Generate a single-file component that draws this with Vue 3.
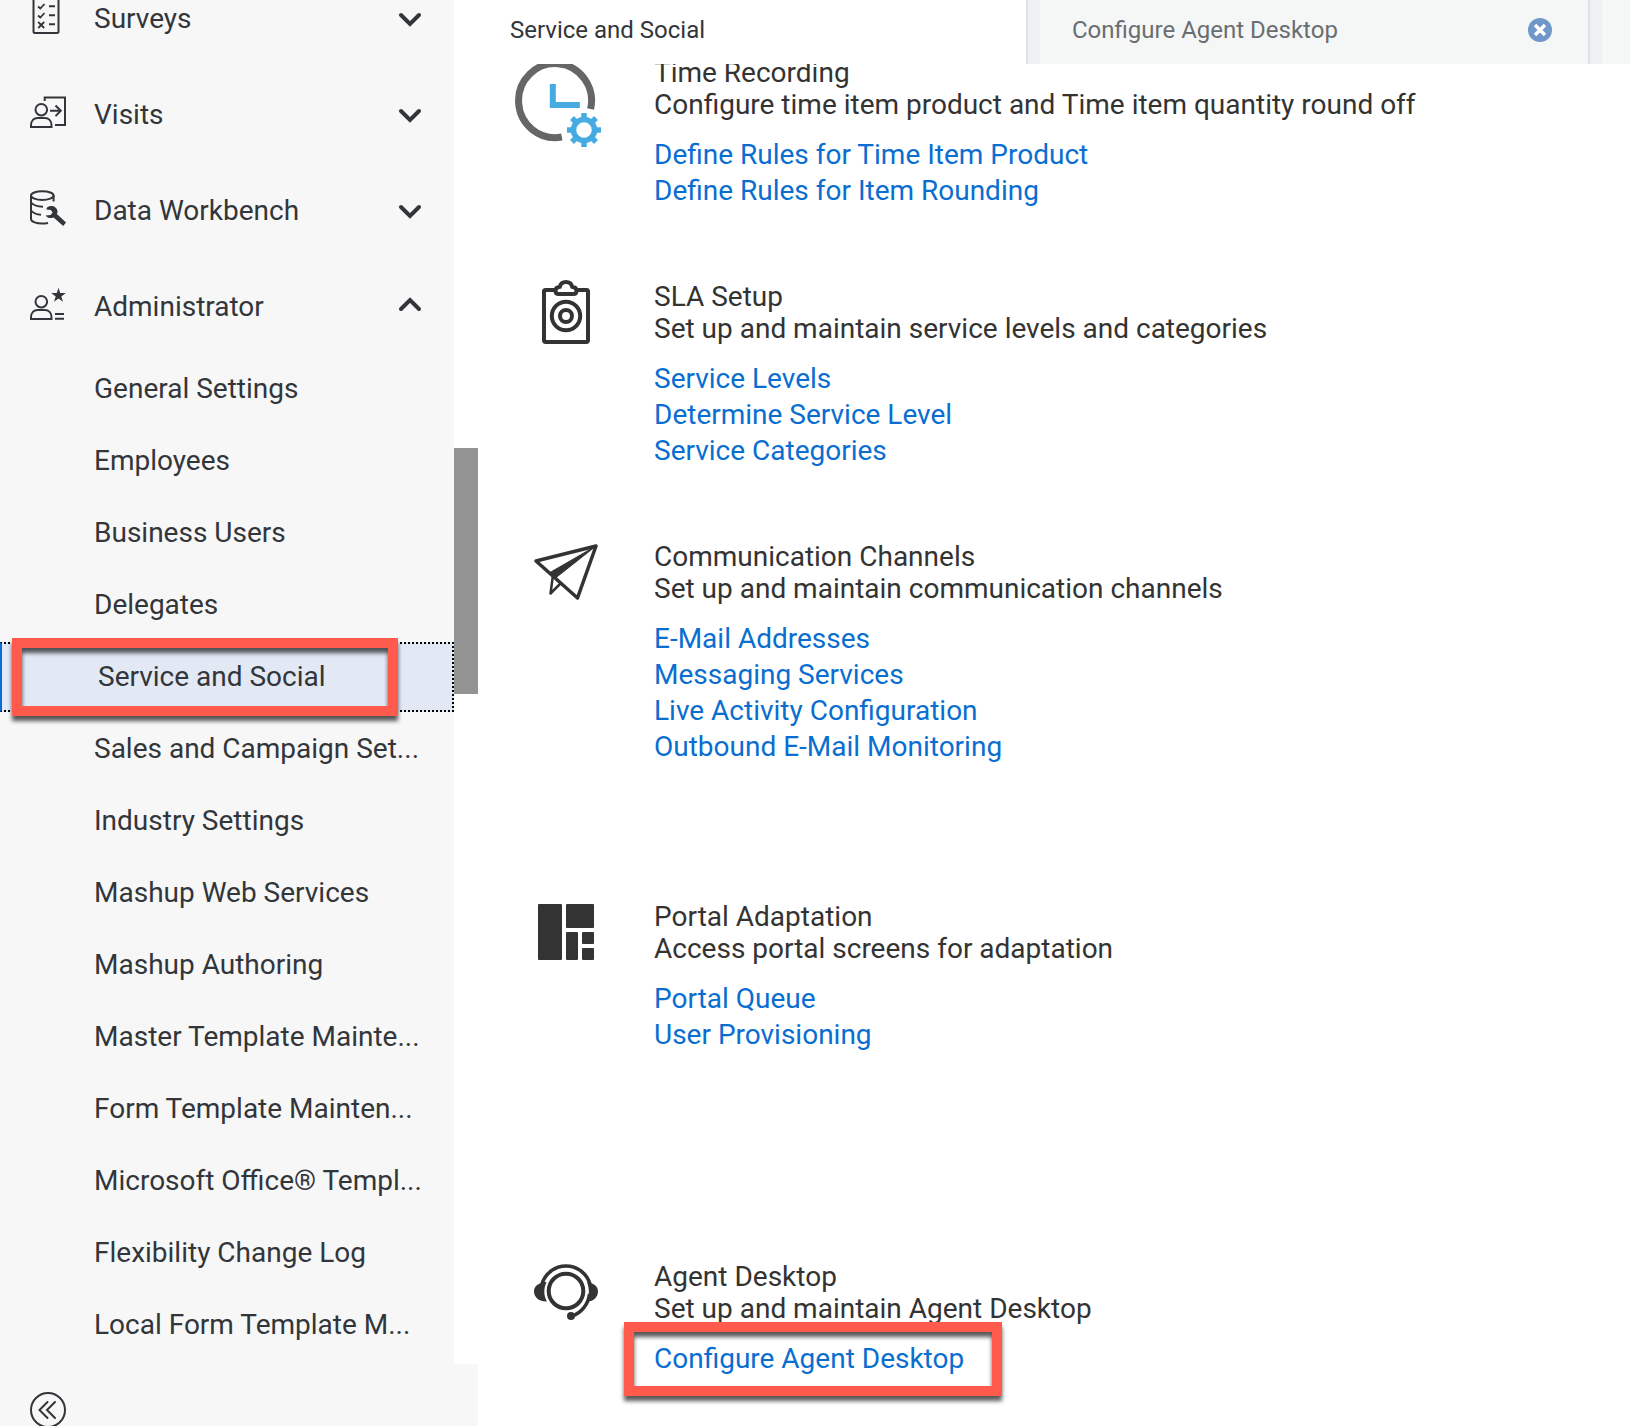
<script setup>
const groups = [
  { name: 'Surveys', icon: 'survey' },
  { name: 'Visits', icon: 'visit' },
  { name: 'Data Workbench', icon: 'data' },
  { name: 'Administrator', icon: 'admin', open: true },
]

const adminItems = [
  'General Settings',
  'Employees',
  'Business Users',
  'Delegates',
  'Service and Social',
  'Sales and Campaign Set...',
  'Industry Settings',
  'Mashup Web Services',
  'Mashup Authoring',
  'Master Template Mainte...',
  'Form Template Mainten...',
  'Microsoft Office® Templ...',
  'Flexibility Change Log',
  'Local Form Template M...',
]
const current = 'Service and Social'

const sections = [
  {
    title: 'Time Recording',
    text: 'Configure time item product and Time item quantity round off',
    icon: 'time',
    links: ['Define Rules for Time Item Product', 'Define Rules for Item Rounding'],
  },
  {
    title: 'SLA Setup',
    text: 'Set up and maintain service levels and categories',
    icon: 'sla',
    links: ['Service Levels', 'Determine Service Level', 'Service Categories'],
  },
  {
    title: 'Communication Channels',
    text: 'Set up and maintain communication channels',
    icon: 'plane',
    tall: true,
    links: ['E-Mail Addresses', 'Messaging Services', 'Live Activity Configuration', 'Outbound E-Mail Monitoring'],
  },
  {
    title: 'Portal Adaptation',
    text: 'Access portal screens for adaptation',
    icon: 'portal',
    tall: true,
    links: ['Portal Queue', 'User Provisioning'],
  },
  {
    title: 'Agent Desktop',
    text: 'Set up and maintain Agent Desktop',
    icon: 'agent',
    links: ['Configure Agent Desktop'],
    marked: true,
  },
]
const teeth = [0, 45, 90, 135, 180, 225, 270, 315]
</script>

<template>
  <div class="shell">
    <aside class="side">
      <div class="scroller">
        <nav class="nav">
          <button v-for="g in groups" :key="g.name" type="button" class="group" :aria-expanded="!!g.open">
            <svg class="group-icon" viewBox="0 0 36 36" fill="none" stroke="currentColor" stroke-width="2" aria-hidden="true">
              <template v-if="g.icon === 'survey'">
                <rect x="3.500" y="-4" width="25" height="39" rx="1.500" />
                <path d="M8 8.500l2.300 2L14.500 6M8 17.500l2.300 2L14.500 15M8.200 24l6 6M14.200 24l-6 6" stroke-width="1.800" />
                <path d="M19 8.300h6M19 17.300h6M19 26.300h6" />
              </template>
              <template v-else-if="g.icon === 'visit'">
                <circle cx="11.300" cy="15.700" r="5.800" />
                <path d="M1 33v-1.500c0-5 3-7.500 6.500-7.500h7.500c3.500 0 6.500 2.500 6.500 7.500V33z" />
                <path d="M14.700 7V3.500H35V31H25M20 16.800h10.500M25.500 11.500l5.300 5.300-5.300 5.300" />
              </template>
              <template v-else-if="g.icon === 'data'">
                <ellipse cx="12.300" cy="5.600" rx="11.300" ry="4.300" />
                <path d="M1 5.600V29c0 3 6 4.500 11 4.500 2 0 4-.2 6-.6M23.600 5.600V11.500M1 12.500c2 2.500 7 4 12 4.200M1 20.500c2 2.500 6 4 10 4.200" />
                <path d="M17.500 17c4-2.600 9.500-.4 10 4 .1 1.400-.2 2.200-.6 3L36 32.500 33.200 36 23.600 27.500c-3 1.200-6.300.4-8-2l5-.4 2-2.500-1.800-2.600-4.500-.4c.2-1 .6-1.900 1.200-2.600z" fill="currentColor" stroke="none" />
              </template>
              <template v-else>
                <circle cx="11.300" cy="15.700" r="5.800" />
                <path d="M1 33v-1.500c0-5 3-7.500 6.500-7.500h7.500c3.500 0 6.500 2.500 6.500 7.500V33z" />
                <path d="M25 28h9M25 32.800h9" />
                <path d="M28.500 1.800l1.700 5.200h5.600l-4.500 3.400 1.700 5.400-4.500-3.300-4.500 3.300 1.700-5.400L21.200 7h5.600z" fill="currentColor" stroke="none" />
              </template>
            </svg>
            <span class="group-name">{{ g.name }}</span>
            <svg class="chevron" viewBox="0 0 22 22" fill="none" stroke="currentColor" stroke-width="4" stroke-linecap="round" aria-hidden="true">
              <path :d="g.open ? 'M2 16l9-9 9 9' : 'M2 10l9 9 9-9'" />
            </svg>
          </button>
          <ul class="items">
            <li v-for="item in adminItems" :key="item" class="item" :class="{ current: item === current }">
              <a href="#">{{ item }}</a>
              <span v-if="item === current" class="mark mark-item"></span>
            </li>
          </ul>
        </nav>
        <div class="track"><div class="thumb"></div></div>
      </div>
      <div class="side-foot">
        <button type="button" class="collapse" aria-label="Collapse navigation">
          <svg viewBox="0 0 36 36" fill="none" stroke="currentColor" stroke-width="2" stroke-linecap="round" aria-hidden="true">
            <circle cx="18" cy="18" r="17" />
            <path d="M17.500 10l-8 8 8 8M25 10l-8 8 8 8" />
          </svg>
        </button>
      </div>
    </aside>

    <main class="main">
      <div class="tabs" role="tablist">
        <div class="tab active"><button type="button" role="tab" aria-selected="true" class="tab-name">Service and Social</button></div>
        <div class="tab">
          <button type="button" role="tab" aria-selected="false" class="tab-name">Configure Agent Desktop</button>
          <button type="button" class="close" aria-label="Close tab">
            <svg viewBox="0 0 24 24" aria-hidden="true">
              <circle cx="12" cy="12" r="12" fill="#6f97c8" />
              <path d="M7 7l10 10M17 7l-10 10" stroke="#fff" stroke-width="3.500" />
            </svg>
          </button>
        </div>
        <div class="tab rest"></div>
      </div>

      <div class="content">
        <section v-for="s in sections" :key="s.title" class="section" :class="{ tall: s.tall }">
          <svg class="picture" viewBox="0 0 104 88" fill="none" stroke="#333" aria-hidden="true">
            <template v-if="s.icon === 'time'">
              <path d="M76.600 53A36.500 37 0 1 0 47.800 81" stroke="#666" stroke-width="7" />
              <path d="M38.800 28v21h27" stroke="#45abe0" stroke-width="6" />
              <circle cx="70" cy="74" r="10.500" stroke="#45abe0" stroke-width="5.500" />
              <path v-for="a in teeth" :key="a" d="M70 57v6" stroke="#45abe0" stroke-width="5.500" :transform="`rotate(${a} 70 74)`" />
            </template>
            <template v-else-if="s.icon === 'sla'">
              <path d="M41 10H31.500a1.500 1.500 0 0 0-1.500 1.500v49a1.500 1.500 0 0 0 1.500 1.500h41a1.500 1.500 0 0 0 1.500-1.500v-49a1.500 1.500 0 0 0-1.500-1.500H63" stroke-width="4" />
              <path d="M44.500 14h15c2 0 3-1.500 3-3.300 0-2.400-1.800-3.700-4.300-4C57.500 3.800 55 2 52 2s-5.500 1.800-6.200 4.700c-2.500.3-4.300 1.600-4.300 4 0 1.800 1 3.300 3 3.300z" stroke-width="4" />
              <circle cx="52" cy="36" r="14.200" stroke-width="4" />
              <circle cx="52" cy="36" r="6" stroke-width="4" />
            </template>
            <template v-else-if="s.icon === 'plane'">
              <path d="M22 21L82 6 63.500 58z" stroke-width="3.500" stroke-linejoin="round" />
              <path d="M36 32.500L82 6 41.500 38z" fill="#333" stroke-width="1" />
              <path d="M39 35l-2.500 18.500L47 43" stroke-width="2.500" stroke-linejoin="round" />
            </template>
            <g v-else-if="s.icon === 'portal'" fill="#333" stroke="none">
              <rect x="24" y="4" width="24" height="56" rx="1" />
              <rect x="52" y="4" width="28" height="24" rx="1" />
              <rect x="52" y="32" width="12" height="28" rx="1" />
              <rect x="68" y="32" width="12" height="12" rx="1" />
              <rect x="68" y="48" width="12" height="12" rx="1" />
            </g>
            <template v-else>
              <circle cx="52" cy="31" r="17.300" stroke-width="4" />
              <path d="M28 24a25 25 0 0 1 48 0M75.500 34c-1 10-8 19-18 22.500" stroke-width="3.500" />
              <path d="M31 22c-7 1-11 4.500-11 9.500s4 10 13 10c-3.500-6-3.500-13-.5-19.500zM73 22c7 1 11 4.500 11 9.500s-4 10-11 10c2.500-6 2.500-13 0-19.500z" fill="#333" stroke="none" />
              <circle cx="57" cy="56" r="4" fill="#333" stroke="none" />
            </template>
          </svg>
          <div class="body">
            <h2>{{ s.title }}</h2>
            <p>{{ s.text }}</p>
            <ul class="links">
              <li v-for="l in s.links" :key="l"><a href="#">{{ l }}</a></li>
              <li v-if="s.marked" class="mark mark-link" aria-hidden="true"></li>
            </ul>
          </div>
        </section>
      </div>
    </main>
  </div>
</template>

<style>
body {
  margin: 0;
  background: #fff;
}
</style>

<style scoped>
.shell {
  display: flex;
  height: 100vh;
  overflow: hidden;
  font-family: Roboto, "Liberation Sans", sans-serif;
  font-size: 28px;
  line-height: 32px;
  color: #32363a;
}
button {
  padding: 0;
  border: 0;
  background: none;
  font: inherit;
  color: inherit;
  text-align: left;
}
a {
  color: inherit;
  text-decoration: none;
}
ul {
  margin: 0;
  padding: 0;
  list-style: none;
}
svg {
  display: block;
  overflow: visible;
}
.side {
  display: flex;
  flex-direction: column;
  flex: 0 0 478px;
}
.scroller {
  display: flex;
  flex: 1;
  min-height: 0;
  overflow: hidden;
}
.nav {
  flex: 1;
  margin-top: -32px;
  background: #f7f7f7;
}
.group {
  display: flex;
  align-items: center;
  width: 100%;
  height: 96px;
  padding: 0 33px 0 30px;
}
.group-icon {
  width: 36px;
  height: 36px;
}
.group-name {
  flex: 1;
  padding: 6px 0 0 28px;
}
.chevron {
  width: 22px;
  height: 22px;
}
.item {
  position: relative;
  height: 70px;
  margin-top: 2px;
  box-sizing: border-box;
}
.item a {
  display: flex;
  align-items: center;
  height: 100%;
  padding-left: 94px;
  white-space: nowrap;
}
.item.current {
  border: 2px dotted #000;
  border-left: 2px solid #0a6ed1;
  background: #e2e8f4;
}
.item.current a {
  padding-left: 96px;
}
.mark {
  position: absolute;
  box-sizing: border-box;
  border: 10px solid #ff5a4c;
  filter: drop-shadow(0 5px 2px rgba(0, 0, 0, 0.65));
  pointer-events: none;
}
.mark-item {
  top: -6px;
  left: 10px;
  right: 54px;
  height: 78px;
}
.track {
  flex: 0 0 24px;
  padding-top: 448px;
}
.thumb {
  height: 246px;
  background: #939393;
}
.side-foot {
  display: flex;
  align-items: flex-start;
  flex: 0 0 62px;
  min-height: 0;
  height: 62px;
  box-sizing: border-box;
  padding: 28px 30px 0;
  background: #f7f7f7;
}
.collapse {
  flex: none;
  width: 36px;
  height: 36px;
}
.main {
  display: flex;
  flex-direction: column;
  flex: 1;
  min-width: 0;
}
.tabs {
  display: flex;
  flex: 0 0 64px;
  overflow: hidden;
  font-size: 24px;
}
.tab {
  display: flex;
  align-items: center;
  flex: 0 0 562px;
  box-sizing: border-box;
  padding: 0 38px 4px 32px;
  border-right: 12px solid #eef0f2;
  background: #f5f7f7;
  box-shadow: inset -2px 0 #e0e3e4;
  color: #6a6d70;
}
.tab.active {
  background: #fff;
  color: #32363a;
}
.tab.rest {
  flex: 1;
  border: 0;
  box-shadow: none;
}
.tab-name {
  flex: 1;
}
.close {
  flex: none;
  width: 24px;
  height: 24px;
}
.content {
  flex: 1;
  min-height: 0;
  overflow: hidden;
  color: #333;
}
.section {
  display: flex;
  gap: 36px;
  padding: 0 36px 69px;
}
.section:first-child {
  margin-top: -8px;
}
.section.tall {
  box-sizing: border-box;
  min-height: 360px;
}
.picture {
  flex: 0 0 104px;
  height: 88px;
}
.body {
  flex: 1;
  min-width: 0;
  padding-top: 1px;
}
h2,
p {
  margin: 0;
  font-size: 28px;
  font-weight: 400;
}
.links {
  position: relative;
  padding-top: 18px;
  line-height: 32px;
  color: #0a6ed1;
}
.links li:not(.mark) {
  height: 36px;
}
.mark-link {
  top: -3px;
  left: -30px;
  width: 378px;
  height: 74px;
}
</style>
